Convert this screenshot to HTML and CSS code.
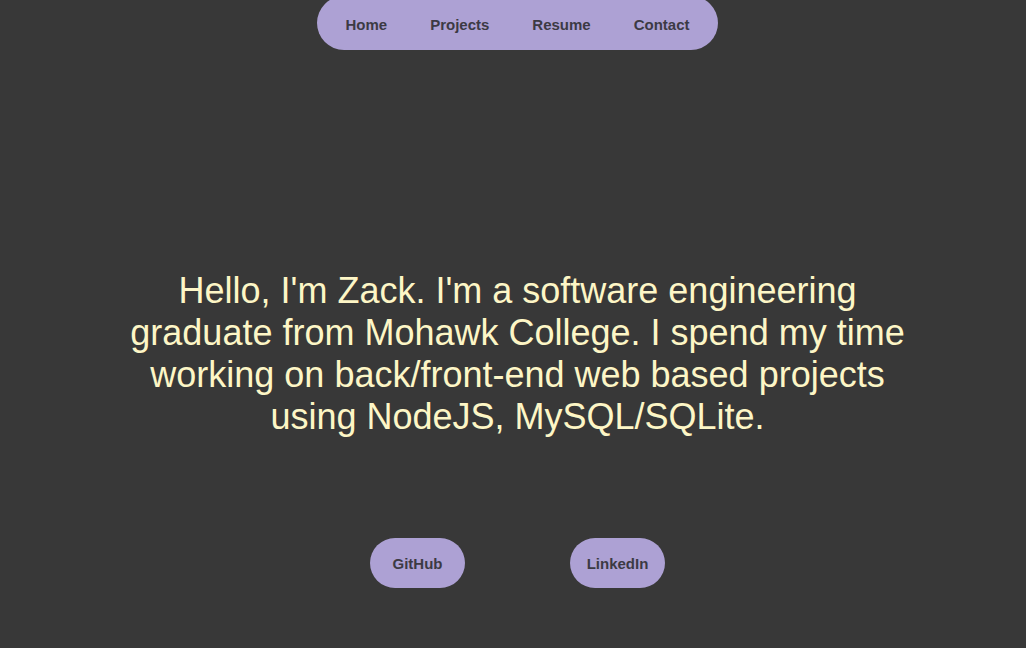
FILE: index.html
```html
<!DOCTYPE html>
<html lang="en">
<head>
<meta charset="utf-8">
<title>Zack</title>
<link rel="stylesheet" href="styles.css">
</head>
<body>
<div class="page">
  <header class="nav-wrap">
    <nav class="nav">
      <a href="#" class="nav-link">Home</a>
      <a href="#" class="nav-link">Projects</a>
      <a href="#" class="nav-link">Resume</a>
      <a href="#" class="nav-link">Contact</a>
    </nav>
  </header>
  <main class="hero">
    <p class="intro">Hello, I'm Zack. I'm a software engineering graduate from Mohawk College. I spend my time working on back/front-end web based projects using NodeJS, MySQL/SQLite.</p>
    <div class="links">
      <a href="#" class="btn">GitHub</a>
      <a href="#" class="btn">LinkedIn</a>
    </div>
  </main>
</div>
</body>
</html>
```

FILE: styles.css
```css
html, body {
  margin: 0;
  padding: 0;
  background: #383838;
  height: 100%;
  overflow: hidden;
}
body {
  font-family: "Liberation Sans", Arial, sans-serif;
}
.page {
  padding-left: 9px;
}
.nav-wrap {
  display: flex;
  justify-content: center;
}
.nav {
  display: flex;
  align-items: center;
  gap: 43px;
  height: 54px;
  margin-top: -4px;
  padding: 2px 28px 0;
  box-sizing: border-box;
  background: #ada1d4;
  border-radius: 27px;
}
.nav-link {
  color: #3c3a44;
  text-decoration: none;
  font-weight: bold;
  font-size: 15px;
}
.hero {
  display: flex;
  flex-direction: column;
  align-items: center;
}
.intro {
  width: 800px;
  margin: 220px 0 0;
  text-align: center;
  color: #fdf6c6;
  font-size: 36px;
  line-height: 42px;
}
.links {
  display: flex;
  gap: 105px;
  margin-top: 100px;
}
.btn {
  display: flex;
  align-items: center;
  justify-content: center;
  width: 95px;
  height: 50px;
  box-sizing: border-box;
  border-radius: 25px;
  background: #ada1d4;
  color: #3c3a44;
  text-decoration: none;
  font-weight: bold;
  font-size: 15px;
}
```
